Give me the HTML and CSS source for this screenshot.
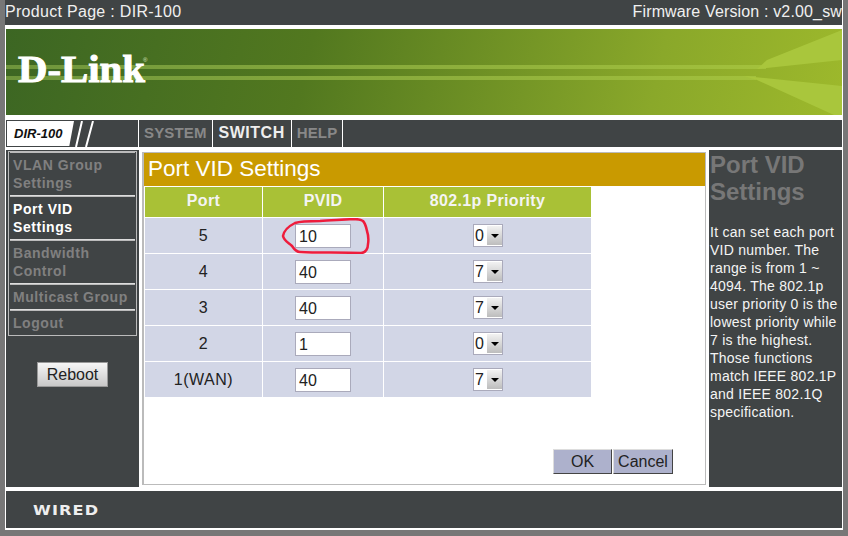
FILE: index.html
```html
<!DOCTYPE html>
<html lang="en">
<head>
    <meta charset="UTF-8">
    <title>DIR-100 Port VID Settings</title>
    <link rel="stylesheet" href="styles.css">
</head>
<body>
    <div class="page">
        <div class="top-bar">
            <span class="top-text">Product Page : DIR-100</span>
            <span class="top-text firmware">Firmware Version : v2.00_sw</span>
        </div>

        <!-- banner -->
        <svg class="banner" viewBox="0 0 836 86" width="836" height="86">
            <defs>
                <linearGradient id="bannerBg" x1="0" y1="0" x2="836" y2="200" gradientUnits="userSpaceOnUse">
                    <stop offset="0" stop-color="#3c6623"/>
                    <stop offset="0.35" stop-color="#52781f"/>
                    <stop offset="0.75" stop-color="#8aa82a"/>
                    <stop offset="1" stop-color="#a0bb2c"/>
                </linearGradient>
                <linearGradient id="bannerLine" x1="0" y1="0" x2="836" y2="0" gradientUnits="userSpaceOnUse">
                    <stop offset="0" stop-color="#6e953c"/>
                    <stop offset="1" stop-color="#a9c63c"/>
                </linearGradient>
            </defs>
            <rect width="836" height="86" fill="url(#bannerBg)"/>
            <rect y="36" width="760" height="4" fill="url(#bannerLine)"/>
            <rect y="47" width="750" height="4" fill="url(#bannerLine)"/>
            <polygon points="761,31 836,1 836,31 751,40" fill="#a9c63c"/>
            <polygon points="738,47 836,57 836,86 828,86 751,51" fill="#a9c63c"/>
            <text class="logo-text" x="12" y="53" textLength="127" lengthAdjust="spacingAndGlyphs">D-Link</text>
            <text class="logo-mark" x="137" y="33">®</text>
        </svg>

        <div class="nav">
            <div class="model">
                <span class="model-tab">DIR-100</span>
                <svg class="model-lines" width="24" height="26" viewBox="0 0 24 26">
                    <path d="M9 0 L3 26 M20 0 L13 26" stroke="#fff" stroke-width="2" fill="none"/>
                </svg>
            </div>
            <a class="nav-link">SYSTEM</a>
            <a class="nav-link active">SWITCH</a>
            <a class="nav-link">HELP</a>
        </div>

        <div class="main">
            <div class="sidebar">
                <ul class="menu">
                    <li class="menu-item">VLAN Group Settings</li>
                    <li class="menu-item active">Port VID Settings</li>
                    <li class="menu-item">Bandwidth Control</li>
                    <li class="menu-item">Multicast Group</li>
                    <li class="menu-item">Logout</li>
                </ul>
                <button class="reboot">Reboot</button>
            </div>

            <div class="content">
                <h1 class="title">Port VID Settings</h1>
                <table class="ports">
                    <tr><th class="col-port">Port</th><th class="col-pvid">PVID</th><th class="col-prio">802.1p Priority</th></tr>
                    <tr>
                        <td>5</td>
                        <td class="pvid-cell">
                            <span class="field">10</span>
                            <svg class="scribble" width="120" height="36" viewBox="0 0 120 36">
                                <path d="M32 5 C26 8 21 12 20 18 C21 23 26 25 29 28 C31 31 33 34 37 34 C55 35 80 34 98 35 C103 35 105 30 105 26 C106 20 105 16 104 13 C103 8 102 5 100 3 C97 1 93 1 90 1 C78 2 67 2 57 3 C48 3 38 3 32 5 Z" fill="none" stroke="#ee1c3c" stroke-width="2.5"/>
                            </svg>
                        </td>
                        <td><span class="pick"><span class="pick-val">0</span><span class="pick-btn"></span></span></td>
                    </tr>
                    <tr>
                        <td>4</td>
                        <td><span class="field">40</span></td>
                        <td><span class="pick"><span class="pick-val">7</span><span class="pick-btn"></span></span></td>
                    </tr>
                    <tr>
                        <td>3</td>
                        <td><span class="field">40</span></td>
                        <td><span class="pick"><span class="pick-val">7</span><span class="pick-btn"></span></span></td>
                    </tr>
                    <tr>
                        <td>2</td>
                        <td><span class="field">1</span></td>
                        <td><span class="pick"><span class="pick-val">0</span><span class="pick-btn"></span></span></td>
                    </tr>
                    <tr>
                        <td>1(WAN)</td>
                        <td><span class="field">40</span></td>
                        <td><span class="pick"><span class="pick-val">7</span><span class="pick-btn"></span></span></td>
                    </tr>
                </table>
                <div class="actions">
                    <button class="action ok">OK</button>
                    <button class="action">Cancel</button>
                </div>
            </div>

            <div class="help">
                <h2 class="help-title">Port VID Settings</h2>
                <p class="help-text">It can set each port VID number. The range is from 1 ~ 4094. The 802.1p user priority 0 is the lowest priority while 7 is the highest. Those functions match IEEE 802.1P and IEEE 802.1Q specification.</p>
            </div>
        </div>

        <div class="footer"><span class="wired">WIRED</span></div>
    </div>
</body>
</html>
```

FILE: styles.css
```css
/* Reset */
* {
    margin: 0;
    padding: 0;
    box-sizing: border-box;
}

body {
    background-color: #777;
    font-family: "Liberation Sans", Arial, sans-serif;
    height: 536px;
    overflow: hidden;
}

.page {
    width: 838px;
    height: 530px;
    margin-left: 5px;
    background-color: #fff;
}

/* Top bar */
.top-bar {
    height: 25px;
    width: 837px;
    background-color: #404445;
    display: flex;
    justify-content: space-between;
    color: #f0f0f0;
}

.top-text {
    font-size: 16px;
    line-height: 23px;
    letter-spacing: 0.3px;
}

.firmware {
    letter-spacing: 0.15px;
}

/* Banner */
.banner {
    display: block;
    margin: 4px 0 5px 1px;
}

.logo-text {
    font-family: "Liberation Serif", serif;
    font-weight: bold;
    font-size: 38px;
    fill: #fff;
    stroke: #fff;
    stroke-width: 1px;
}

.logo-mark {
    font-family: "Liberation Sans", sans-serif;
    font-size: 6px;
    fill: #dfe8c0;
}

/* Nav */
.nav {
    height: 27px;
    width: 836px;
    margin-left: 1px;
    background-color: #404445;
    display: flex;
}

.model {
    width: 133px;
    display: flex;
    align-items: center;
    border-right: 1px solid #fff;
    padding-left: 1px;
}

.model-tab {
    width: 67px;
    height: 25px;
    background-color: #fff;
    clip-path: polygon(0 0, 100% 0, 93% 100%, 0 100%);
    color: #111;
    font-size: 13px;
    font-weight: bold;
    font-style: italic;
    line-height: 25px;
    padding-left: 7px;
}

.model-lines {
    margin-left: -1px;
}

.nav-link {
    font-size: 15px;
    font-weight: bold;
    letter-spacing: 0.15px;
    line-height: 26px;
    color: #888;
    padding: 0 5px;
    border-right: 1px solid #fff;
}

.nav-link.active {
    font-size: 16px;
    letter-spacing: 0.5px;
    color: #eee;
    padding: 0 6px;
}

/* Main */
.main {
    display: flex;
    height: 337px;
    margin: 3px 0 4px 1px;
}

.sidebar {
    width: 133px;
    background-color: #404445;
    padding: 1px 2px 0;
    display: flex;
    flex-direction: column;
    align-items: center;
}

.menu {
    list-style: none;
    width: 129px;
    border: 1px solid #bbb;
    padding: 0 1px;
}

.menu-item {
    font-size: 14px;
    font-weight: bold;
    line-height: 18px;
    letter-spacing: 0.55px;
    color: #808080;
    padding: 3px 7px 3px 3px;
    border-bottom: 1px solid #ddd;
    border-top: 1px solid #bbb;
}

.menu-item.active {
    color: #fff;
}

.menu-item:last-child {
    border-bottom: 0;
}

.reboot {
    width: 71px;
    height: 25px;
    margin-top: 26px;
    border: 1px solid #999;
    background: linear-gradient(#f6f6f6, #c8c8c8);
    font-family: "Liberation Sans", sans-serif;
    font-size: 16px;
    color: #222;
}

/* Content */
.content {
    width: 564px;
    margin: 2px 3px 2px;
    border: 1px solid #bbb;
    border-left-width: 2px;
    display: flex;
    flex-direction: column;
    background-color: #fff;
}

.title {
    height: 33px;
    background-color: #c99a00;
    color: #fff;
    font-size: 22.5px;
    font-weight: normal;
    line-height: 32px;
    padding-left: 4px;
}

.ports {
    border-collapse: separate;
    border-spacing: 1px;
    table-layout: fixed;
    width: 448px;
    text-align: center;
}

.ports th {
    height: 30px;
    background-color: #a9c136;
    color: #f4f4f4;
    font-size: 16px;
    letter-spacing: 0.35px;
    padding-bottom: 2px;
}

.col-port {
    width: 117px;
}

.col-pvid {
    width: 120px;
}

.ports td {
    height: 35px;
    background-color: #d2d6e6;
    font-size: 16px;
    letter-spacing: 0.5px;
    color: #222;
}

.pvid-cell {
    position: relative;
}

.scribble {
    position: absolute;
    left: 0;
    top: 0;
}

.field {
    display: inline-block;
    width: 56px;
    height: 24px;
    background-color: #fff;
    border: 1px solid #aab;
    text-align: left;
    font-size: 16px;
    letter-spacing: 0;
    line-height: 23px;
    padding-left: 3px;
    vertical-align: middle;
}

.pick {
    display: inline-flex;
    width: 30px;
    height: 23px;
    background-color: #fff;
    border: 1px solid #aab;
    vertical-align: middle;
    margin-left: 1px;
    font-size: 16px;
    letter-spacing: 0;
    line-height: 21px;
    text-align: left;
}

.pick-val {
    width: 13px;
    padding-left: 1px;
}

.pick-btn {
    width: 15px;
    margin: 1px 0;
    background: linear-gradient(#f2f2f2, #bdbdbd);
    position: relative;
}

.pick-btn::after {
    content: "";
    position: absolute;
    left: 4px;
    top: 8px;
    border-left: 4px solid transparent;
    border-right: 4px solid transparent;
    border-top: 4px solid #000;
}

.actions {
    margin-top: auto;
    display: flex;
    justify-content: flex-end;
    gap: 1px;
    padding: 0 32px 10px 0;
}

.action {
    width: 60px;
    height: 25px;
    background-color: #adb1cc;
    border: 1px solid;
    border-color: #ddd #444 #444 #ddd;
    font-family: "Liberation Sans", sans-serif;
    font-size: 16px;
    color: #222;
}

.action.ok {
    width: 59px;
}

/* Help panel */
.help {
    width: 133px;
    background-color: #404445;
    padding: 1px 0 0 1px;
    color: #f4f4f4;
}

.help-title {
    font-size: 24px;
    line-height: 27px;
    color: #777;
    margin-bottom: 18px;
}

.help-text {
    font-size: 14px;
    line-height: 18px;
    letter-spacing: 0.25px;
}

/* Footer */
.footer {
    height: 37px;
    width: 836px;
    margin-left: 1px;
    background-color: #404445;
    display: flex;
    align-items: center;
    padding-left: 27px;
}

.wired {
    display: inline-block;
    font-family: "DejaVu Sans", sans-serif;
    font-size: 14px;
    font-weight: bold;
    color: #eee;
    letter-spacing: 1px;
    transform: scaleX(1.15);
    transform-origin: left center;
}
```
